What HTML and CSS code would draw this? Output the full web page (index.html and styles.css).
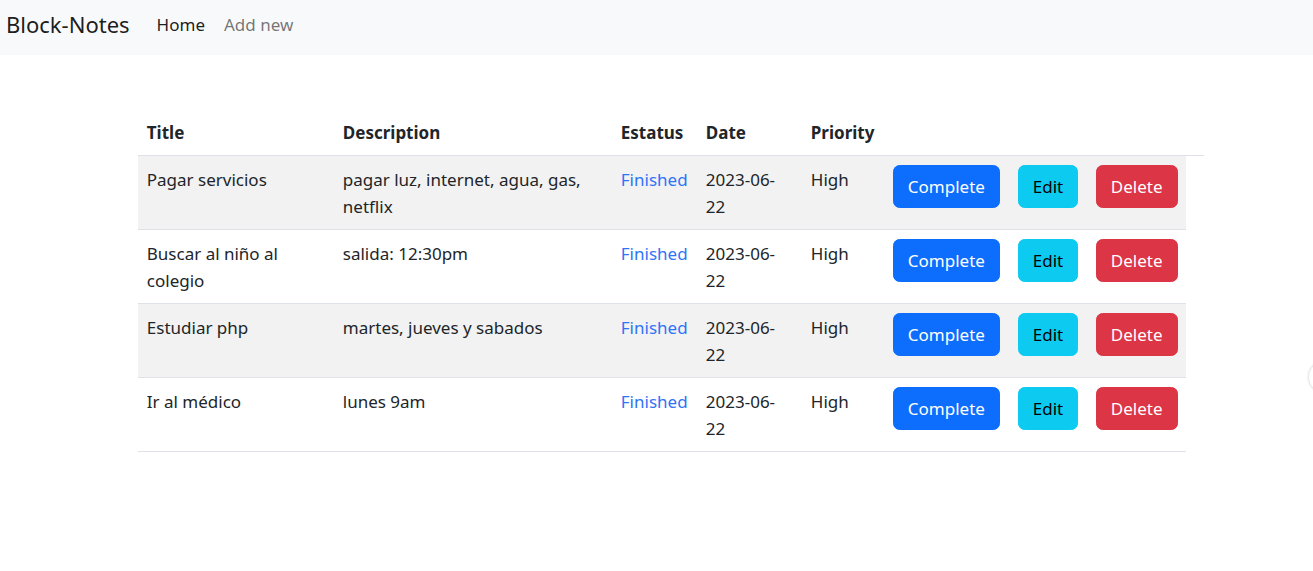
FILE: index.html
```html
<!DOCTYPE html>
<html lang="en">
<head>
<meta charset="utf-8">
<title>Block-Notes</title>
<link rel="stylesheet" href="styles.css">
</head>
<body>
<nav class="navbar">
  <a class="brand" href="#">Block-Notes</a>
  <ul class="nav">
    <li><a class="nav-link active" href="#">Home</a></li>
    <li><a class="nav-link" href="#">Add new</a></li>
  </ul>
</nav>
<main class="container">
  <table class="table">
    <colgroup>
      <col class="c-title"><col class="c-desc"><col class="c-status"><col class="c-date"><col class="c-prio"><col class="c-complete"><col class="c-edit"><col class="c-delete"><col class="c-extra">
    </colgroup>
    <thead>
      <tr>
        <th>Title</th><th>Description</th><th>Estatus</th><th>Date</th><th>Priority</th><th></th><th></th><th></th><th></th>
      </tr>
    </thead>
    <tbody>
      <tr>
        <td>Pagar servicios</td>
        <td>pagar luz, internet, agua, gas, netflix</td>
        <td class="status">Finished</td>
        <td>2023-06-22</td>
        <td>High</td>
        <td class="action"><button class="btn btn-primary">Complete</button></td>
        <td class="action"><button class="btn btn-info">Edit</button></td>
        <td class="action"><button class="btn btn-danger">Delete</button></td>
      </tr>
      <tr>
        <td>Buscar al niño al colegio</td>
        <td>salida: 12:30pm</td>
        <td class="status">Finished</td>
        <td>2023-06-22</td>
        <td>High</td>
        <td class="action"><button class="btn btn-primary">Complete</button></td>
        <td class="action"><button class="btn btn-info">Edit</button></td>
        <td class="action"><button class="btn btn-danger">Delete</button></td>
      </tr>
      <tr>
        <td>Estudiar php</td>
        <td>martes, jueves y sabados</td>
        <td class="status">Finished</td>
        <td>2023-06-22</td>
        <td>High</td>
        <td class="action"><button class="btn btn-primary">Complete</button></td>
        <td class="action"><button class="btn btn-info">Edit</button></td>
        <td class="action"><button class="btn btn-danger">Delete</button></td>
      </tr>
      <tr>
        <td>Ir al médico</td>
        <td>lunes 9am</td>
        <td class="status">Finished</td>
        <td>2023-06-22</td>
        <td>High</td>
        <td class="action"><button class="btn btn-primary">Complete</button></td>
        <td class="action"><button class="btn btn-info">Edit</button></td>
        <td class="action"><button class="btn btn-danger">Delete</button></td>
      </tr>
    </tbody>
  </table>
</main>
<div class="float-handle"></div>
</body>
</html>
```
FILE: styles.css
```css
* { box-sizing: border-box; }
html, body { margin: 0; padding: 0; }
body {
  font-family: "Noto Sans", "Open Sans", sans-serif;
  font-size: 17px;
  line-height: 27px;
  color: #212529;
  background: #fff;
  overflow: hidden;
}
.navbar {
  display: flex;
  align-items: center;
  height: 55px;
  background: #f8f9fa;
  padding: 0 6px 6px;
}
.brand {
  font-size: 22px;
  color: rgba(0,0,0,.9);
  text-decoration: none;
  margin-right: 27px;
}
.nav {
  display: flex;
  list-style: none;
  margin: 0;
  padding: 0;
}
.nav-link {
  display: block;
  margin-right: 19px;
  color: rgba(0,0,0,.55);
  text-decoration: none;
}
.nav-link.active { color: rgba(0,0,0,.9); }
.container {
  padding: 55px 0 0 138px;
}
.table {
  border-collapse: collapse;
  table-layout: fixed;
  width: 1066px;
}
.c-title { width: 196px; }
.c-desc { width: 278px; }
.c-status { width: 85px; }
.c-date { width: 105px; }
.c-prio { width: 82px; }
.c-complete { width: 125px; }
.c-edit { width: 78px; }
.c-delete { width: 99px; }
.c-extra { width: 18px; }
.table th, .table td {
  padding: 8.8px;
  text-align: left;
  vertical-align: top;
  border-bottom: 1px solid #dee2e6;
}
.table th { font-weight: 700; padding-top: 9.3px; padding-bottom: 8.3px; }
.table td { padding-top: 10px; }
.table tbody tr:nth-child(odd) td { background: #f2f2f2; }
.table td.action { padding-top: 9.3px; padding-bottom: 20.7px; }
.status { color: #2f73f6; }
.btn {
  display: inline-block;
  font-family: inherit;
  font-size: 17px;
  line-height: 27px;
  padding: 7px 14px;
  border: 1px solid transparent;
  border-radius: 6.6px;
  cursor: pointer;
}
.btn-primary { background: #0d6efd; border-color: #0d6efd; color: #fff; }
.btn-info { background: #0dcaf0; border-color: #0dcaf0; color: #000; }
.btn-danger { background: #dc3545; border-color: #dc3545; color: #fff; }
.float-handle {
  position: fixed;
  left: 1309px;
  top: 361px;
  width: 32px;
  height: 32px;
  border-radius: 50%;
  background: #fff;
  box-shadow: 0 0 3px rgba(0,0,0,.25);
}
```
